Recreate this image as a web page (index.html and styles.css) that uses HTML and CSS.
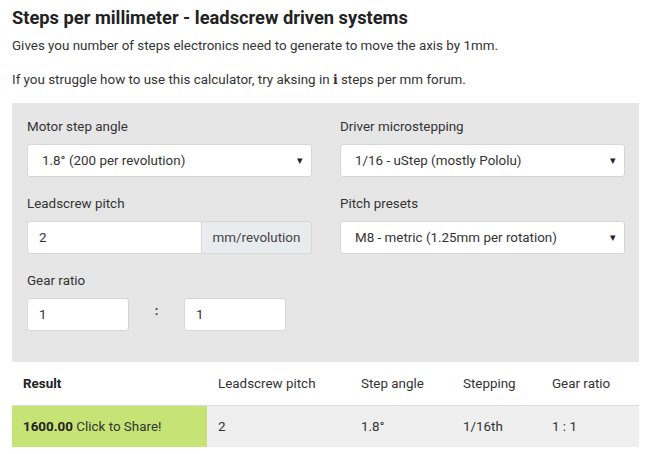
FILE: index.html
```html
<!DOCTYPE html>
<html>
<head>
<meta charset="utf-8">
<link rel="stylesheet" href="styles.css">
</head>
<body>
<div class="page">
  <h2 class="title">Steps per millimeter - leadscrew driven systems</h2>
  <p class="lead">Gives you number of steps electronics need to generate to move the axis by 1mm.</p>
  <p class="lead second">If you struggle how to use this calculator, try aksing in <b class="info">i</b> steps per mm forum.</p>

  <div class="panel">
    <div class="grid">
      <div class="field">
        <label class="label">Motor step angle</label>
        <div class="select"><span>1.8° (200 per revolution)</span><span class="caret">▾</span></div>
      </div>
      <div class="field">
        <label class="label">Driver microstepping</label>
        <div class="select"><span>1/16 - uStep (mostly Pololu)</span><span class="caret">▾</span></div>
      </div>
      <div class="field">
        <label class="label">Leadscrew pitch</label>
        <div class="group">
          <div class="input grow">2</div>
          <div class="addon">mm/revolution</div>
        </div>
      </div>
      <div class="field">
        <label class="label">Pitch presets</label>
        <div class="select"><span>M8 - metric (1.25mm per rotation)</span><span class="caret">▾</span></div>
      </div>
      <div class="field">
        <label class="label">Gear ratio</label>
        <div class="gear">
          <div class="input small">1</div>
          <span class="colon">:</span>
          <div class="input small">1</div>
        </div>
      </div>
    </div>
  </div>

  <table class="results">
    <colgroup>
      <col class="c1"><col class="c2"><col class="c3"><col class="c4"><col>
    </colgroup>
    <thead>
      <tr><th class="strong">Result</th><th>Leadscrew pitch</th><th>Step angle</th><th>Stepping</th><th>Gear ratio</th></tr>
    </thead>
    <tbody>
      <tr><td class="ok"><b>1600.00</b> Click to Share!</td><td>2</td><td>1.8°</td><td>1/16th</td><td>1 : 1</td></tr>
    </tbody>
  </table>
</div>
</body>
</html>
```
FILE: styles.css
```css
* { box-sizing: border-box; }
html, body { margin: 0; padding: 0; background: #fff; }
body {
  font-family: Roboto, "Liberation Sans", Arial, sans-serif;
  color: #333;
  font-size: 13.4px;
}
.page { padding: 0 11px 0 12px; width: 650px; }
.title {
  margin: 0;
  padding-top: 7px;
  font-size: 18.3px;
  line-height: 22px;
  font-weight: 700;
  color: #222;
}
.lead {
  margin: 8px 0 0;
  line-height: 18px;
  font-size: 13.4px;
}
.lead.second { margin-top: 16px; }
.info { font-family: "DejaVu Serif", serif; font-weight: 700; font-size: 12.5px; }

.panel {
  margin-top: 14px;
  background: #e6e6e6;
  padding: 15px 14px 31px 15px;
}
.grid {
  display: grid;
  grid-template-columns: 285px 285px;
  column-gap: 28px;
  row-gap: 18px;
}
.label {
  display: block;
  font-size: 13.4px;
  line-height: 18px;
  margin-bottom: 8px;
  color: #333;
}
.select {
  height: 33px;
  background: #fff;
  border: 1px solid #d6d6d6;
  border-radius: 3px;
  display: flex;
  align-items: center;
  justify-content: space-between;
  padding: 0 8px 0 14px;
  font-size: 13.4px;
  color: #333;
}
.caret { font-size: 11px; color: #222; }
.group { display: flex; height: 33px; }
.input {
  height: 33px;
  background: #fff;
  border: 1px solid #d6d6d6;
  border-radius: 3px;
  display: flex;
  align-items: center;
  padding: 0 11px;
  font-size: 13.4px;
  color: #333;
}
.input.grow { flex: 1; border-radius: 3px 0 0 3px; border-right: 0; }
.addon {
  width: 111px;
  background: #e9ecef;
  border: 1px solid #d6d6d6;
  border-radius: 0 3px 3px 0;
  display: flex;
  align-items: center;
  justify-content: center;
  font-size: 13.4px;
  color: #444;
}
.gear { display: flex; align-items: center; }
.input.small { width: 102px; }
.colon { width: 55px; text-align: center; font-weight: 700; font-size: 13px; margin-top: -8px; color: #444; }

.results {
  width: 627px;
  border-collapse: collapse;
  table-layout: fixed;
  font-size: 13.4px;
}
.c1 { width: 195px; }
.c2 { width: 143px; }
.c3 { width: 102px; }
.c4 { width: 89px; }
.results th {
  text-align: left;
  font-weight: 400;
  height: 43px;
  padding: 0 11px;
  color: #333;
}
.results th.strong { font-weight: 700; color: #222; }
.results td {
  height: 42px;
  padding: 0 11px;
  background: #efefef;
  border-top: 1px solid #dcdcdc;
}
.results td.ok { background: #c6e475; }
.results td b { color: #222; }
```
